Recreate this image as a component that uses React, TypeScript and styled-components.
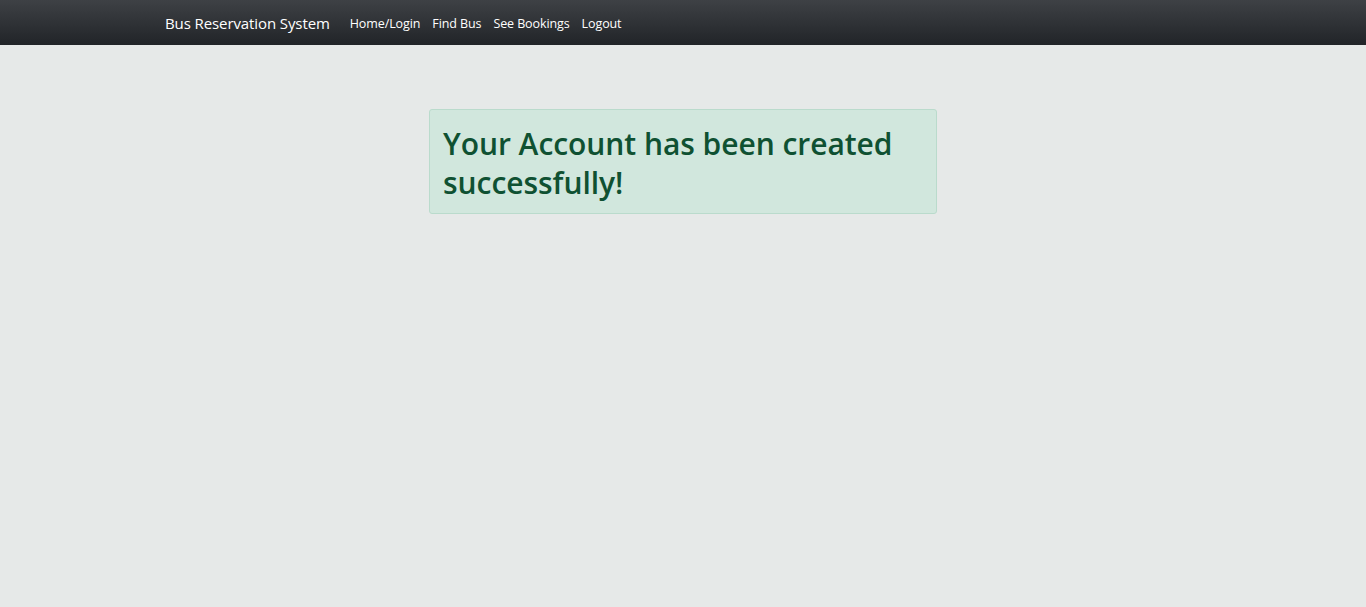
import styled, { createGlobalStyle } from "styled-components";

const GlobalStyle = createGlobalStyle`
  html, body {
    margin: 0;
    padding: 0;
    height: 100%;
  }
  body {
    background-color: #e6e9e8;
    font-family: "Open Sans", "Noto Sans", sans-serif;
  }
  #root {
    min-height: 100%;
  }
`;

const NavBar = styled.nav`
  height: 45px;
  background: linear-gradient(180deg, #3e4145 0%, #212428 100%);
  display: flex;
  align-items: center;
`;

const NavContainer = styled.div`
  display: flex;
  align-items: center;
  padding-left: 165px;
  padding-top: 1px;
`;

const Brand = styled.a`
  color: #ffffff;
  font-size: 15px;
  margin-right: 14px;
  text-decoration: none;
  letter-spacing: -0.1px;
`;

const NavLink = styled.a`
  color: #ffffff;
  font-size: 12.5px;
  padding: 0 6px;
  text-decoration: none;
  letter-spacing: -0.1px;
`;

const Main = styled.main`
  display: flex;
  justify-content: center;
  padding-top: 64px;
`;

const Alert = styled.div`
  width: 508px;
  box-sizing: border-box;
  background-color: #d1e7dd;
  border: 1px solid #badbcc;
  border-radius: 3px;
  padding: 14px 13px 11px;
  color: #0f5132;
`;

const Heading = styled.h2`
  margin: 0;
  font-size: 30px;
  font-weight: 600;
  line-height: 39px;
  letter-spacing: -0.05px;
`;

export default function App() {
  return (
    <>
      <GlobalStyle />
      <NavBar>
        <NavContainer>
          <Brand href="#">Bus Reservation System</Brand>
          <NavLink href="#">Home/Login</NavLink>
          <NavLink href="#">Find Bus</NavLink>
          <NavLink href="#">See Bookings</NavLink>
          <NavLink href="#">Logout</NavLink>
        </NavContainer>
      </NavBar>
      <Main>
        <Alert>
          <Heading>Your Account has been created successfully!</Heading>
        </Alert>
      </Main>
    </>
  );
}
